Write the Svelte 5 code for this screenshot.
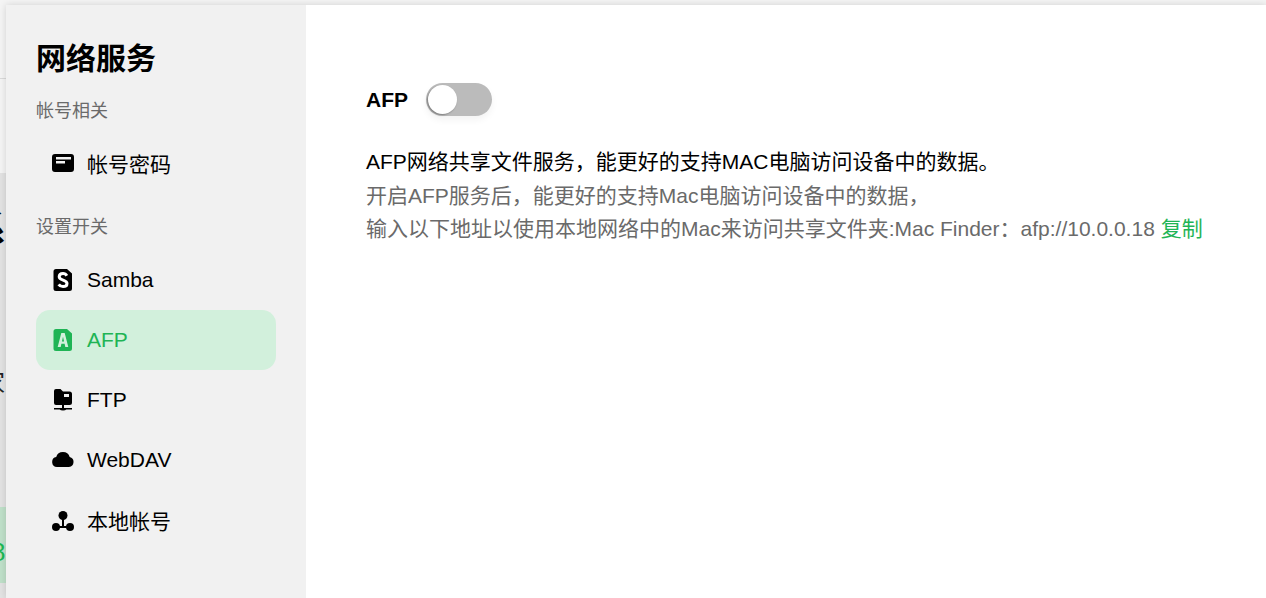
<script lang="ts">
	type NavItem = { id: string; label: string; icon: string };

	const accountItems: NavItem[] = [{ id: 'password', label: '帐号密码', icon: 'card' }];
	const switchItems: NavItem[] = [
		{ id: 'samba', label: 'Samba', icon: 'samba' },
		{ id: 'afp', label: 'AFP', icon: 'afp' },
		{ id: 'ftp', label: 'FTP', icon: 'ftp' },
		{ id: 'webdav', label: 'WebDAV', icon: 'cloud' },
		{ id: 'local', label: '本地帐号', icon: 'nodes' }
	];

	let active = $state('afp');
	let enabled = $state(false);
</script>

{#snippet icon(name: string)}
	<svg class="icon" viewBox="0 0 22 22" aria-hidden="true">
		{#if name === 'card'}
			<path fill-rule="evenodd" d="M3 2h16a3 3 0 0 1 3 3v12a3 3 0 0 1-3 3H3a3 3 0 0 1-3-3V5a3 3 0 0 1 3-3zM4 5v2.500h15V5zM4 9v2.500h9V9z" />
		{:else if name === 'samba' || name === 'afp'}
			<path d="M4 0h11l5 4.500V19.500a2.500 2.500 0 0 1-2.500 2.500h-13.500a2.500 2.500 0 0 1-2.500-2.500v-17a2.500 2.500 0 0 1 2.500-2.500z" />
			{#if name === 'samba'}
				<path class="cut-line" d="M14.800 6.800C14 5.300 12.600 4.600 11 4.600 8.700 4.600 7.200 5.800 7.200 7.800c0 4 7.800 2.600 7.800 6.600 0 2-1.700 3.100-4 3.100-1.800 0-3.300-.7-4.300-2.200" />
			{:else}
				<path class="cut" fill-rule="evenodd" d="M9.300 4h3.400l3.600 14h-3l-.7-3.200h-3.200l-.7 3.200h-3zM11 7.800l-1.100 4.600h2.200z" />
			{/if}
		{:else if name === 'ftp'}
			<path fill-rule="evenodd" d="M2 2a2 2 0 0 1 2-2h4.500l2.500 2.500h6.500a2.500 2.500 0 0 1 2.500 2.500v8.500a2.500 2.500 0 0 1-2.500 2.500H4a2 2 0 0 1-2-2zM12 5v3h5V5z" />
			<path d="M10 16h2v3h8v1.500h-5.700a3.500 1.600 0 0 1-6.600 0H2V19h8z" />
		{:else if name === 'cloud'}
			<path d="M5 18a5 5 0 0 1-.8-9.900A7 7 0 0 1 11 3a7 7 0 0 1 6.700 5 5.100 5.100 0 0 1-.7 10z" />
		{:else}
			<circle cx="11" cy="6.500" r="4.500" />
			<circle cx="4" cy="18" r="4" />
			<circle cx="18" cy="18" r="4" />
			<path d="M10 9h2v8h6v2H4v-2h6z" />
		{/if}
	</svg>
{/snippet}

{#snippet navList(items: NavItem[])}
	<ul class="nav">
		{#each items as item (item.id)}
			<li>
				<button class="nav-item" class:active={active === item.id} onclick={() => (active = item.id)}>
					{@render icon(item.icon)}
					<span>{item.label}</span>
				</button>
			</li>
		{/each}
	</ul>
{/snippet}

<div class="page">
	<!-- the page behind the drawer, only a sliver of it shows -->
	<div class="behind" aria-hidden="true">
		<div class="behind-head"></div>
		<div class="behind-body">
			<span class="frag-title">系</span>
			<span class="frag-text">家</span>
			<div class="frag-green">8</div>
		</div>
	</div>

	<div class="drawer">
		<aside class="sidebar">
			<h1>网络服务</h1>
			<h2>帐号相关</h2>
			{@render navList(accountItems)}
			<h2 class="second">设置开关</h2>
			{@render navList(switchItems)}
		</aside>

		<main class="content">
			<div class="switch-row">
				<strong>AFP</strong>
				<button class="toggle" class:on={enabled} aria-label="AFP" onclick={() => (enabled = !enabled)}>
					<span class="knob"></span>
				</button>
			</div>
			<p class="lead">AFP网络共享文件服务，能更好的支持MAC电脑访问设备中的数据。</p>
			<p class="hint">
				开启AFP服务后，能更好的支持Mac电脑访问设备中的数据，<br />
				输入以下地址以使用本地网络中的Mac来访问共享文件夹:Mac Finder：afp://10.0.0.18 <a href="#copy" class="copy">复制</a>
			</p>
		</main>
	</div>
</div>

<style>
	:global(body) {
		overflow: hidden;
	}

	.page {
		position: relative;
		width: 1266px;
		height: 598px;
		overflow: hidden;
		background: #f4f4f4;
		font-family: "Liberation Sans", "Noto Sans CJK SC", sans-serif;
		font-size: 20px;
		color: #000;
	}

	.behind {
		position: absolute;
		inset: 0;
		width: 6px;
		overflow: hidden;
	}

	.behind-head {
		height: 78px;
		border-bottom: 1px solid #d9d9d9;
	}

	.behind-body {
		height: 519px;
		position: relative;
		background: linear-gradient(#f4f4f4 0 94px, #e2e2e2 94px);
	}

	.frag-title {
		position: absolute;
		left: -30px;
		top: 126px;
		font-size: 36px;
		font-weight: 700;
		line-height: 50px;
	}

	.frag-text {
		position: absolute;
		left: -19px;
		top: 288px;
		font-size: 24px;
		line-height: 32px;
		color: #222;
	}

	.frag-green {
		position: absolute;
		left: 0;
		right: 0;
		top: 428px;
		height: 76px;
		background: #bfe0c9;
		color: #1db954;
		font-size: 26px;
		line-height: 90px;
		text-indent: -9px;
	}

	.drawer {
		position: absolute;
		left: 6px;
		top: 5px;
		right: 0;
		bottom: 0;
		display: flex;
		background: #fff;
		box-shadow: 0 0 7px rgba(0, 0, 0, 0.14);
	}

	.sidebar {
		flex: 0 0 300px;
		box-sizing: border-box;
		padding: 30px 30px 0;
		background: #f1f1f1;
	}

	h1 {
		margin: 0;
		font-size: 30px;
		line-height: 48px;
		font-weight: 700;
	}

	h2 {
		margin: 15px 0 0;
		font-size: 18px;
		line-height: 26px;
		font-weight: 400;
		color: #6a6a6a;
	}

	h2.second {
		margin-top: 21px;
	}

	.nav {
		list-style: none;
		margin: 9px 0 0;
		padding: 0;
	}

	h2.second + .nav {
		margin-top: 10px;
	}

	.nav-item {
		display: flex;
		align-items: center;
		gap: 13px;
		width: 100%;
		height: 60px;
		padding: 0 16px;
		border: 0;
		border-radius: 14px;
		background: none;
		font: inherit;
		font-size: 21px;
		color: inherit;
		cursor: pointer;
	}

	.nav-item.active {
		background: #d2f0dc;
		color: #1fb455;
	}

	.icon {
		flex: none;
		width: 22px;
		height: 22px;
		fill: currentColor;
	}

	.cut {
		fill: #fff;
	}

	.cut-line {
		fill: none;
		stroke: #fff;
		stroke-width: 3;
	}

	.active .cut {
		fill: #d2f0dc;
	}

	.content {
		flex: 1;
		padding: 78px 60px 0;
	}

	.switch-row {
		display: flex;
		align-items: center;
		gap: 18px;
		height: 33px;
	}

	.switch-row strong {
		font-size: 21px;
	}

	.toggle {
		position: relative;
		width: 66px;
		height: 33px;
		padding: 0;
		border: 0;
		border-radius: 17px;
		background: #bbb;
		box-shadow: 0 4px 7px rgba(0, 0, 0, 0.05);
		cursor: pointer;
	}

	.knob {
		position: absolute;
		left: 2px;
		top: 2px;
		width: 29px;
		height: 29px;
		border-radius: 50%;
		background: #fff;
		box-shadow: -1px 1px 2px rgba(0, 0, 0, 0.35);
	}

	.toggle.on {
		background: #1db954;
	}

	.toggle.on .knob {
		left: 35px;
	}

	.lead {
		margin: 29px 0 0;
		font-size: 21px;
		line-height: 33px;
	}

	.hint {
		margin: 1px 0 0;
		font-size: 21px;
		line-height: 33px;
		color: #6a6a6a;
		white-space: nowrap;
	}

	.copy {
		color: #1fb455;
		text-decoration: none;
	}
</style>
